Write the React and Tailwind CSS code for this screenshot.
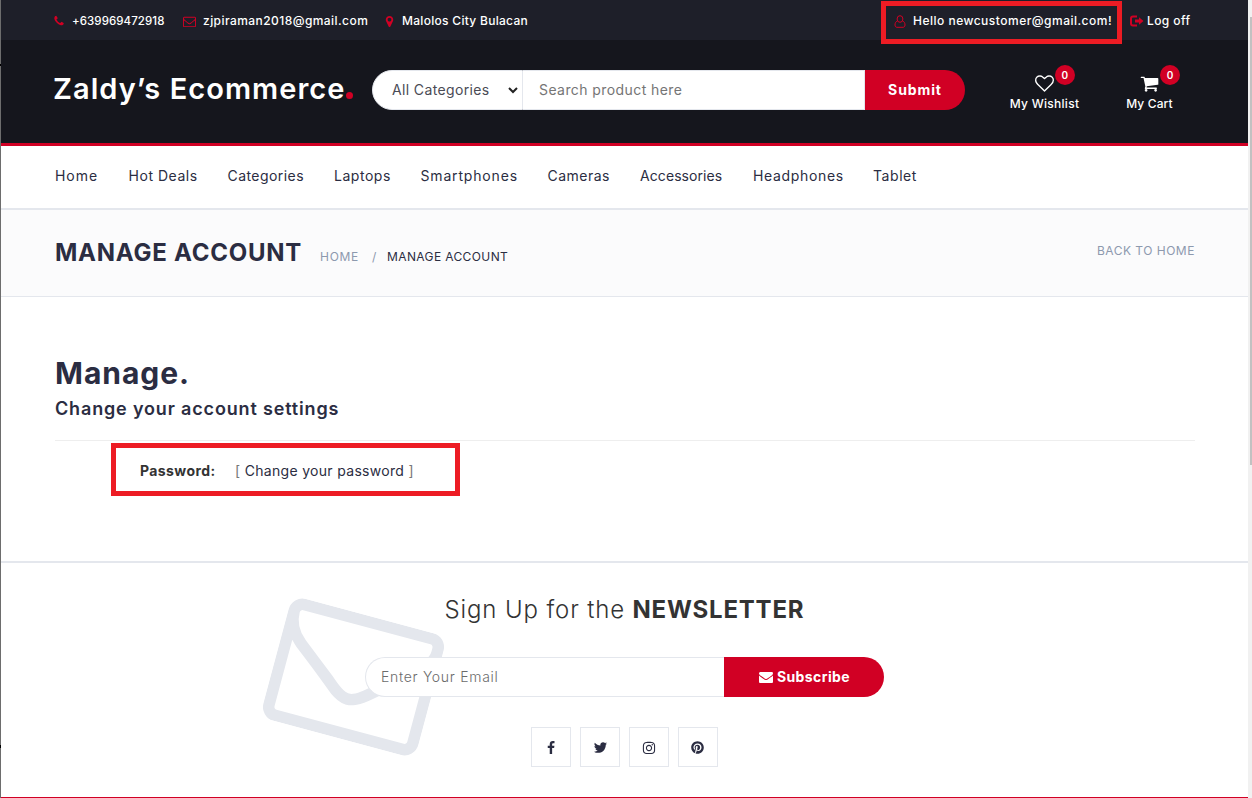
import { FaInstagram, FaPinterest } from "react-icons/fa";

const PATHS = {
  phone: "M1600 1240q0 27-10 70.5t-21 68.5q-21 50-122 106-94 51-186 51-27 0-52.5-3.5t-57.5-12.5-47.5-14.5-55.5-20.5-49-18q-98-35-175-83-128-79-264.5-215.5t-215.5-264.5q-48-77-83-175-3-9-18-49t-20.5-55.5-14.5-47.5-12.5-57.5-3.5-52.5q0-92 51-186 56-101 106-122 25-11 68.5-21t70.5-10q14 0 21 3 18 6 53 76 11 19 30 54t35 63.5 31 53.5q3 4 17.5 25t21.5 35.5 7 28.5q0 20-28.5 50t-62 55-62 53-28.5 46q0 9 5 22.5t8.5 20.5 14 24 11.5 19q76 137 174 235t235 174q2 1 19 11.5t24 14 20.5 8.5 22.5 5q18 0 46-28.5t53-62 55-62 50-28.5q14 0 28.5 7t35.5 21.5 25 17.5q25 15 53.5 31t63.5 35 54 30q70 35 76 53 3 7 3 21z",
  envelopeO: "M1664 1504v-768q-32 36-69 66-268 206-426 338-51 43-83 67t-86.5 48.5-102.5 24.5h-2q-48 0-102.5-24.5t-86.5-48.5-83-67q-158-132-426-338-37-30-69-66v768q0 13 9.5 22.5t22.5 9.5h1472q13 0 22.5-9.5t9.5-22.5zm0-1051v-24.5l-.5-13-3-12.5-5.5-9-9-7.5-14-2.5h-1472q-13 0-22.5 9.5t-9.5 22.5q0 168 147 284 193 152 401 317 6 5 35 29.5t46 37.5 44.5 31.5 50.5 27.5 43 9h2q20 0 43-9t50.5-27.5 44.5-31.5 46-37.5 35-29.5q208-165 401-317 54-43 100.5-115.5t46.5-131.5zm128-37v1088q0 66-47 113t-113 47h-1472q-66 0-113-47t-47-113v-1088q0-66 47-113t113-47h1472q66 0 113 47t47 113z",
  envelope: "M1792 710v794q0 66-47 113t-113 47h-1472q-66 0-113-47t-47-113v-794q44 49 101 87 362 246 497 345 57 42 92.5 65.5t94.5 48 110 24.5h2q51 0 110-24.5t94.5-48 92.5-65.5q170-123 498-345 57-39 100-87zm0-294q0 79-49 151t-122 123q-376 261-468 325-10 7-42.5 31t-54 38.5-52 32.5-57.5 27-50 9h-2q-23 0-50-9t-57.5-27-52-32.5-54-38.5-42.5-31q-91-64-262-182.5t-205-142.5q-62-42-117-115.5t-55-136.5q0-78 41.5-130t118.5-52h1472q65 0 112.5 47t47.5 113z",
  marker: "M1152 640q0-106-75-181t-181-75-181 75-75 181 75 181 181 75 181-75 75-181zm256 0q0 109-33 179l-364 774q-16 33-47.5 52t-67.5 19-67.5-19-46.5-52l-365-774q-33-70-33-179 0-212 150-362t362-150 362 150 150 362z",
  heart: "M1664 596q0-81-21.5-143t-55-98.5-81.5-59.5-94-31-98-8-112 25.5-110.5 64-86.5 72-60 61.5q-18 22-49 22t-49-22q-24-28-60-61.5t-86.5-72-110.5-64-112-25.5-98 8-94 31-81.5 59.5-55 98.5-21.500 143q0 168 187 355l581 560 580-559q188-188 188-356zm128 0q0 221-229 450l-623 600q-18 18-44 18t-44-18l-624-602q-10-8-27.5-26t-55.5-65.5-68-97.5-53.5-121-23.5-138q0-220 127-344t351-124q62 0 126.5 21.5t120 58 95.5 68.5 76 68q36-36 76-68t95.5-68.5 120-58 126.5-21.5q224 0 351 124t127 344z",
  cart: "M704 1536q0 52-38 90t-90 38-90-38-38-90 38-90 90-38 90 38 38 90zm896 0q0 52-38 90t-90 38-90-38-38-90 38-90 90-38 90 38 38 90zm128-1088v512q0 24-16.5 42.5t-40.5 21.5l-1044 122q13 60 13 70 0 16-24 64h920q26 0 45 19t19 45-19 45-45 19h-1024q-26 0-45-19t-19-45q0-11 8-31.5t16-36 21.5-40 15.5-29.5l-177-823h-204q-26 0-45-19t-19-45 19-45 45-19h256q16 0 28.5 6.5t19.5 15.5 13 24.5 8 26 5.5 29.5 4.5 26h1201q26 0 45 19t19 45z",
  twitter: "M1684 408q-67 98-162 167 1 14 1 42 0 130-38 259.5t-115.5 248.5-184.5 210.5-258 146-323 54.5q-271 0-496-145 35 4 78 4 225 0 401-138-105-2-188-64.5t-114-159.5q33 5 61 5 43 0 85-11-112-23-185.5-111.5t-73.5-205.5v-4q68 38 146 41-66-44-105-115t-39-154q0-88 44-163 121 149 294.5 238.5t371.5 99.5q-8-38-8-74 0-134 94.5-228.5t228.5-94.5q140 0 236 102 109-21 205-78-37 115-142 178 93-10 186-50z",
  facebook: "M1343 12v264h-157q-86 0-116 36t-30 108v189h293l-39 296h-254v759h-306v-759h-255v-296h255v-218q0-186 104-288.5t277-102.5q147 0 228 12z",
  signOut: "M704 1440q0 4 1 20t.5 26.5-3 23.5-10 19.5-20.5 6.5h-320q-119 0-203.5-84.5t-84.5-203.5v-704q0-119 84.5-203.5t203.5-84.5h320q13 0 22.5 9.5t9.5 22.5q0 4 1 20t.5 26.5-3 23.5-10 19.5-20.5 6.5h-320q-66 0-113 47t-47 113v704q0 66 47 113t113 47h312l11.5 1 11.5 3 8 5.5 7 9 2 13.5zm928-544q0 26-19 45l-544 544q-19 19-45 19t-45-19-19-45v-288h-448q-26 0-45-19t-19-45v-384q0-26 19-45t45-19h448v-288q0-26 19-45t45-19 45 19l544 544q19 19 19 45z",
};

function Icon({ name, className }) {
  return (
    <svg viewBox="0 0 1792 1792" fill="currentColor" className={className}>
      <path d={PATHS[name]} />
    </svg>
  );
}

function UserIcon({ className }) {
  return (
    <svg viewBox="0 0 12 13" fill="none" stroke="currentColor" strokeWidth="1" className={className}>
      <ellipse cx="6" cy="4" rx="2.9" ry="3.3" />
      <path d="M3.2 6.200C1.500 6.700 1 8.300 1 10 1 11.500 1.800 12.300 3 12.300h6c1.200 0 2-.8 2-2.300 0-1.700-.5-3.300-2.200-3.800" />
    </svg>
  );
}

function SignOutIcon({ className }) {
  return (
    <svg viewBox="0 0 14 12" className={className} fill="none" stroke="currentColor" strokeWidth="2">
      <path d="M7 1.500H3Q1 1.500 1 3.500v5Q1 10.500 3 10.500h4" />
      <path d="M5 4.500h4V2.200L13.500 6 9 9.800V7.500H5z" fill="currentColor" stroke="none" />
    </svg>
  );
}

const NAV = [
  ["Home", "w-[73.5px] tracking-[0.94px]"],
  ["Hot Deals", "w-[99px] tracking-[0.54px]"],
  ["Categories", "w-[106.5px] tracking-[0.44px]"],
  ["Laptops", "w-[86.5px] tracking-[0.53px]"],
  ["Smartphones", "w-[127px] tracking-[0.83px]"],
  ["Cameras", "w-[92.5px] tracking-[0.48px]"],
  ["Accessories", "w-[113px] tracking-[0.08px]"],
  ["Headphones", "w-[120px] tracking-[0.67px]"],
  ["Tablet", "w-[60px] tracking-[0.56px]"],
];

function TopBar() {
  return (
    <div className="flex h-10 items-center bg-[#1e1f29] pt-[2px] pl-[52px] text-[12px] font-medium text-white">
      <Icon name="phone" className="mr-[7px] size-[12px] text-[#d10024]" />
      <span className="w-[111px] pt-px text-[11.5px] tracking-[0.07px]">+639969472918</span>
      <Icon name="envelopeO" className="mr-[7px] size-[13px] text-[#d10024]" />
      <span className="w-[180px] tracking-[0.44px]">zjpiraman2018@gmail.com</span>
      <Icon name="marker" className="mr-[6px] size-[13px] text-[#d10024]" />
      <span className="w-[492px] tracking-[0.29px]">Malolos City Bulacan</span>
      <UserIcon className="mr-[7px] h-[13px] w-[12px] text-[#d10024]" />
      <span className="w-[217px] tracking-[0.49px]">Hello newcustomer@gmail.com!</span>
      <SignOutIcon className="mr-[3px] h-[12px] w-[14px] text-[#d10024]" />
      <span className="tracking-[0.4px]">Log off</span>
    </div>
  );
}

function HeaderLink({ icon, label, className, badgeClass }) {
  return (
    <div className={"relative flex flex-col items-center text-white " + className}>
      <Icon name={icon} className="size-[19px]" />
      <span className="mt-[3px] text-[12px] leading-4 font-medium">{label}</span>
      <span className={"absolute -top-[9px] flex size-5 items-center justify-center rounded-full bg-[#d10024] text-[10px] font-semibold " + badgeClass}>
        0
      </span>
    </div>
  );
}

function Header() {
  return (
    <header className="flex h-[106px] border-b-[3px] border-[#d10024] bg-[#15161d] pl-[52px]">
      <div className="flex w-[319px] items-baseline pt-[29px] text-[29px] leading-10 font-semibold text-white">
        <span className="w-[293px] tracking-[1.05px]">Zaldy’s Ecommerce</span>
        <span className="size-[7px] rounded-full bg-[#d10024]" />
      </div>
      <div className="mt-[30px] flex h-10 w-[593px] text-[14px]">
        <div className="flex w-[151px] items-center rounded-l-full border border-[#e4e7ed] bg-white pl-[19px] text-[#4a4b55]">
          <span className="w-[116px] pb-[2px] tracking-[0.36px]">All Categories</span>
          <svg viewBox="0 0 10 7" className="h-[7px] w-[10px]" fill="none" stroke="#222" strokeWidth="2">
            <path d="M1 1l4 4 4-4" />
          </svg>
        </div>
        <div className="flex w-[342px] items-center border border-l-0 border-[#e4e7ed] bg-white pb-[2px] pl-[16px] tracking-[0.42px] text-[#757575]">
          Search product here
        </div>
        <div className="flex w-[100px] items-center justify-center rounded-r-full bg-[#d10024] pb-[2px] font-bold tracking-[0.9px] text-white">
          Submit
        </div>
      </div>
      <div className="flex pt-[34px]">
        <HeaderLink icon="heart" label="My Wishlist" className="ml-[44px] w-[71px] tracking-[0.28px]" badgeClass="left-[46px]" />
        <HeaderLink icon="cart" label="My Cart" className="ml-[45px] w-[49px] tracking-[0.14px]" badgeClass="left-[35px]" />
      </div>
    </header>
  );
}

function Newsletter() {
  return (
    <section className="relative flex grow flex-col items-center border-t-2 border-[#e4e7ed]">
      <svg viewBox="0 256 1792 1408" className="absolute top-[51px] left-[272px] h-[126px] w-[161px] rotate-15 text-[#e4e7ed]" fill="currentColor">
        <path d={PATHS.envelopeO} />
      </svg>
      <div className="mt-[29px] flex h-9 w-[360px] items-center text-[24px] text-[#333333]">
        <span className="w-[188px] font-light tracking-[0.88px]">Sign Up for the</span>
        <span className="font-bold tracking-[0.8px]">NEWSLETTER</span>
      </div>
      <div className="relative mt-[29px] flex h-10 w-[519px] text-[14px]">
        <div className="flex w-[359px] items-center rounded-l-full border border-r-0 border-[#e4e7ed] bg-white pb-[2px] pl-[15px] font-light tracking-[0.7px] text-[#6b6b6b]">
          Enter Your Email
        </div>
        <div className="flex w-40 items-center justify-center gap-[4px] rounded-r-full bg-[#d10024] pl-px font-bold tracking-[0.4px] text-white">
          <Icon name="envelope" className="size-[14px]" />
          <span className="pb-[2px]">Subscribe</span>
        </div>
      </div>
      <div className="mt-[30px] flex gap-[9px] text-[#2b2d42]">
        <span className="flex size-10 items-center justify-center border border-[#e4e7ed] pt-px"><Icon name="facebook" className="size-[14px]" /></span>
        <span className="flex size-10 items-center justify-center border border-[#e4e7ed] pt-px"><Icon name="twitter" className="size-[15px]" /></span>
        <span className="flex size-10 items-center justify-center border border-[#e4e7ed] pt-px"><FaInstagram className="size-[14px]" /></span>
        <span className="flex size-10 items-center justify-center border border-[#e4e7ed] pt-px pr-px"><FaPinterest className="size-[13px]" /></span>
      </div>
    </section>
  );
}

export default function App() {
  return (
    <div className="relative flex h-[798px] w-[1252px] overflow-hidden bg-white font-['Inter',sans-serif] whitespace-nowrap text-[#2b2d42]">
      <div className="w-px shrink-0 bg-[#6d6d6d]" />
      <div className="flex w-[1247px] shrink-0 flex-col border-b border-[#d10024]">
        <TopBar />
        <Header />
        <nav className="flex h-16 items-center border-b-2 border-[#e4e7ed] pb-[3px] pl-[54px] text-[14px]">
          {NAV.map(([label, cls]) => (
            <span key={label} className={"shrink-0 " + cls}>{label}</span>
          ))}
        </nav>
        <div className="flex h-[87px] items-baseline border-b border-[#e4e7ed] bg-[#fbfbfc] pt-[25px] pl-[54px]">
          <h1 className="w-[265px] text-[24px] leading-9 font-bold tracking-[0.75px]">MANAGE ACCOUNT</h1>
          <span className="w-[52px] text-[12px] tracking-[0.72px] text-[#8d99ae]">HOME</span>
          <span className="w-[15px] text-[12px] text-[#8d99ae]">/</span>
          <span className="w-[710px] text-[12px] tracking-[0.38px]">MANAGE ACCOUNT</span>
          <span className="-translate-y-[6px] text-[12px] tracking-[0.49px] text-[#8d99ae]">BACK TO HOME</span>
        </div>
        <main className="h-[264px] pt-[56px] pl-[54px]">
          <h2 className="text-[30px] leading-10 font-bold tracking-[0.95px]">Manage.</h2>
          <h3 className="mt-[2px] text-[18px] leading-7 font-semibold tracking-[0.84px]">Change your account settings</h3>
          <hr className="mt-[17px] w-[1140px] border-[#eeeeee]" />
          <div className="flex pt-[20px] pl-[85px] text-[14px] leading-5 text-[#333333]">
            <span className="w-[95px] font-bold tracking-[0.4px]">Password:</span>
            <span className="tracking-[0.31px]">
              <span className="text-[#777777]">[</span> <span className="text-[#2b2d42]">Change your password</span> <span className="text-[#777777]">]</span>
            </span>
          </div>
        </main>
        <Newsletter />
      </div>
      <div className="flex w-[4px] shrink-0 justify-end bg-[#f1f1f1] pt-[17px]">
        <div className="h-[448px] w-[2px] bg-[#c1c1c1]" />
      </div>
      <div className="absolute top-[1px] left-[881px] h-[43px] w-[241px] border-[5px] border-[#ed1c24]" />
      <div className="absolute top-[443px] left-[111px] h-[53px] w-[349px] border-[5px] border-[#ed1c24]" />
      <div className="absolute top-[64px] left-0 h-[2px] w-px bg-black" />
      <div className="absolute top-[745px] left-0 h-[3px] w-px bg-black" />
    </div>
  );
}
